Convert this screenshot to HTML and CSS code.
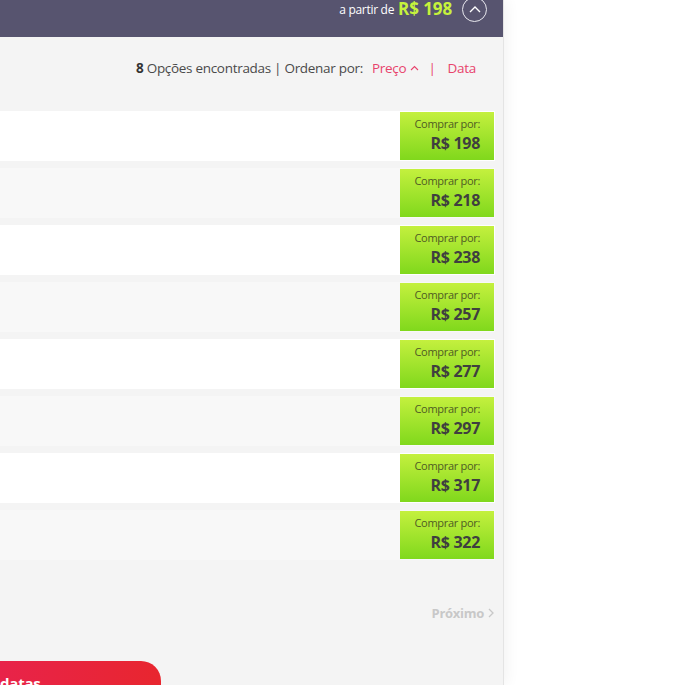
FILE: index.html
```html
<!DOCTYPE html>
<html lang="pt-BR">
<head>
    <meta charset="UTF-8">
    <meta name="viewport" content="width=device-width, initial-scale=1.0">
    <title>Opções encontradas</title>
    <link rel="stylesheet" href="styles.css">
</head>
<body>
    <div class="panel">
        <div class="topbar">
            <span class="from">a partir de</span>
            <span class="from-price">R$ 198</span>
            <span class="toggle">
                <svg width="12" height="8" viewBox="0 0 12 8"><path d="M1 7 L6 2 L11 7" fill="none" stroke="#fff" stroke-width="1.4"/></svg>
            </span>
        </div>

        <div class="sort">
            <b>8</b>&nbsp;Opções encontradas | Ordenar por:
            <span class="sort-link active">Preço <svg width="9" height="6" viewBox="0 0 9 6"><path d="M1 5 L4.5 1.5 L8 5" fill="none" stroke="#e8436c" stroke-width="1.1"/></svg></span>
            <span class="sort-sep">|</span>
            <span class="sort-link">Data</span>
        </div>

        <div class="offers">
            <div class="offer"><div class="buy"><span class="buy-label">Comprar por:</span><span class="buy-price">R$ 198</span></div></div>
            <div class="offer"><div class="buy"><span class="buy-label">Comprar por:</span><span class="buy-price">R$ 218</span></div></div>
            <div class="offer"><div class="buy"><span class="buy-label">Comprar por:</span><span class="buy-price">R$ 238</span></div></div>
            <div class="offer"><div class="buy"><span class="buy-label">Comprar por:</span><span class="buy-price">R$ 257</span></div></div>
            <div class="offer"><div class="buy"><span class="buy-label">Comprar por:</span><span class="buy-price">R$ 277</span></div></div>
            <div class="offer"><div class="buy"><span class="buy-label">Comprar por:</span><span class="buy-price">R$ 297</span></div></div>
            <div class="offer"><div class="buy"><span class="buy-label">Comprar por:</span><span class="buy-price">R$ 317</span></div></div>
            <div class="offer"><div class="buy"><span class="buy-label">Comprar por:</span><span class="buy-price">R$ 322</span></div></div>
        </div>

        <div class="pager">
            <span class="next">Próximo <svg width="6" height="10" viewBox="0 0 6 10"><path d="M1 1 L5 5 L1 9" fill="none" stroke="#c8c8c8" stroke-width="1.3"/></svg></span>
        </div>

        <div class="change-dates">datas</div>
    </div>
</body>
</html>
```

FILE: styles.css
```css
* {
    box-sizing: border-box;
    margin: 0;
    padding: 0;
}

body {
    background-color: #fff;
    font-family: 'Open Sans', 'Noto Sans', sans-serif;
    overflow: hidden;
}

.panel {
    width: 504px;
    height: 685px;
    background-color: #f4f4f4;
    border-right: 1px solid #e4e4e4;
    box-shadow: 2px 0 14px rgba(0,0,0,0.06);
    overflow: hidden;
}

.topbar {
    height: 37px;
    background-color: #57546f;
    display: flex;
    justify-content: flex-end;
    align-items: flex-start;
    padding-right: 16px;
}

.from {
    color: #fff;
    font-size: 12px;
    line-height: 20px;
    letter-spacing: -0.3px;
}

.from-price {
    color: #c6f23c;
    font-weight: 700;
    font-size: 17px;
    line-height: 18px;
    margin-left: 4px;
    letter-spacing: -0.1px;
}

.toggle {
    width: 25px;
    height: 25px;
    border: 1.3px solid #e8e8ee;
    border-radius: 50%;
    margin-top: -3px;
    margin-left: 10px;
    display: flex;
    align-items: center;
    justify-content: center;
    padding-bottom: 2px;
}

.sort {
    display: flex;
    justify-content: flex-end;
    align-items: center;
    height: 20px;
    margin-top: 21px;
    padding-right: 27px;
    font-size: 13.5px;
    color: #4a4a4a;
    letter-spacing: -0.3px;
}

.sort b {
    color: #333;
}

.sort-link {
    color: #e8436c;
    margin-left: 9px;
}

.sort-link svg {
    margin-left: 1px;
    vertical-align: 2px;
}

.sort-sep {
    color: #e8436c;
    margin-left: 9px;
    margin-right: 3px;
}

.offers {
    margin-top: 33px;
    padding-right: 8px;
    display: flex;
    flex-direction: column;
    gap: 7px;
}

.offer {
    height: 50px;
    background-color: #fff;
    display: flex;
    justify-content: flex-end;
    padding: 1px 1px 1px 0;
}

.offer:nth-child(even) {
    background-color: #f8f8f8;
}

.buy {
    width: 94px;
    height: 48px;
    background: linear-gradient(to bottom, #c4f03e, #80d81c);
    display: flex;
    flex-direction: column;
    align-items: flex-end;
    padding: 4px 14px 0 0;
}

.buy-label {
    font-size: 11px;
    color: #4f5b24;
    line-height: 16px;
    letter-spacing: -0.3px;
}

.buy-price {
    font-size: 16px;
    font-weight: 700;
    color: #3f3f3f;
    line-height: 22px;
    letter-spacing: -0.3px;
}

.pager {
    display: flex;
    justify-content: flex-end;
    padding-right: 9px;
    margin-top: 44px;
}

.next {
    color: #c8c8c8;
    font-weight: 700;
    font-size: 13px;
    letter-spacing: -0.3px;
}

.next svg {
    margin-left: 1px;
}

.change-dates {
    width: 161px;
    height: 40px;
    margin-top: 39px;
    background: linear-gradient(100deg, #e8234a, #e8262e);
    border-top-right-radius: 20px;
    color: #fff;
    font-weight: 700;
    font-size: 15px;
    line-height: 16px;
    padding-top: 14px;
    letter-spacing: -0.2px;
}
```
